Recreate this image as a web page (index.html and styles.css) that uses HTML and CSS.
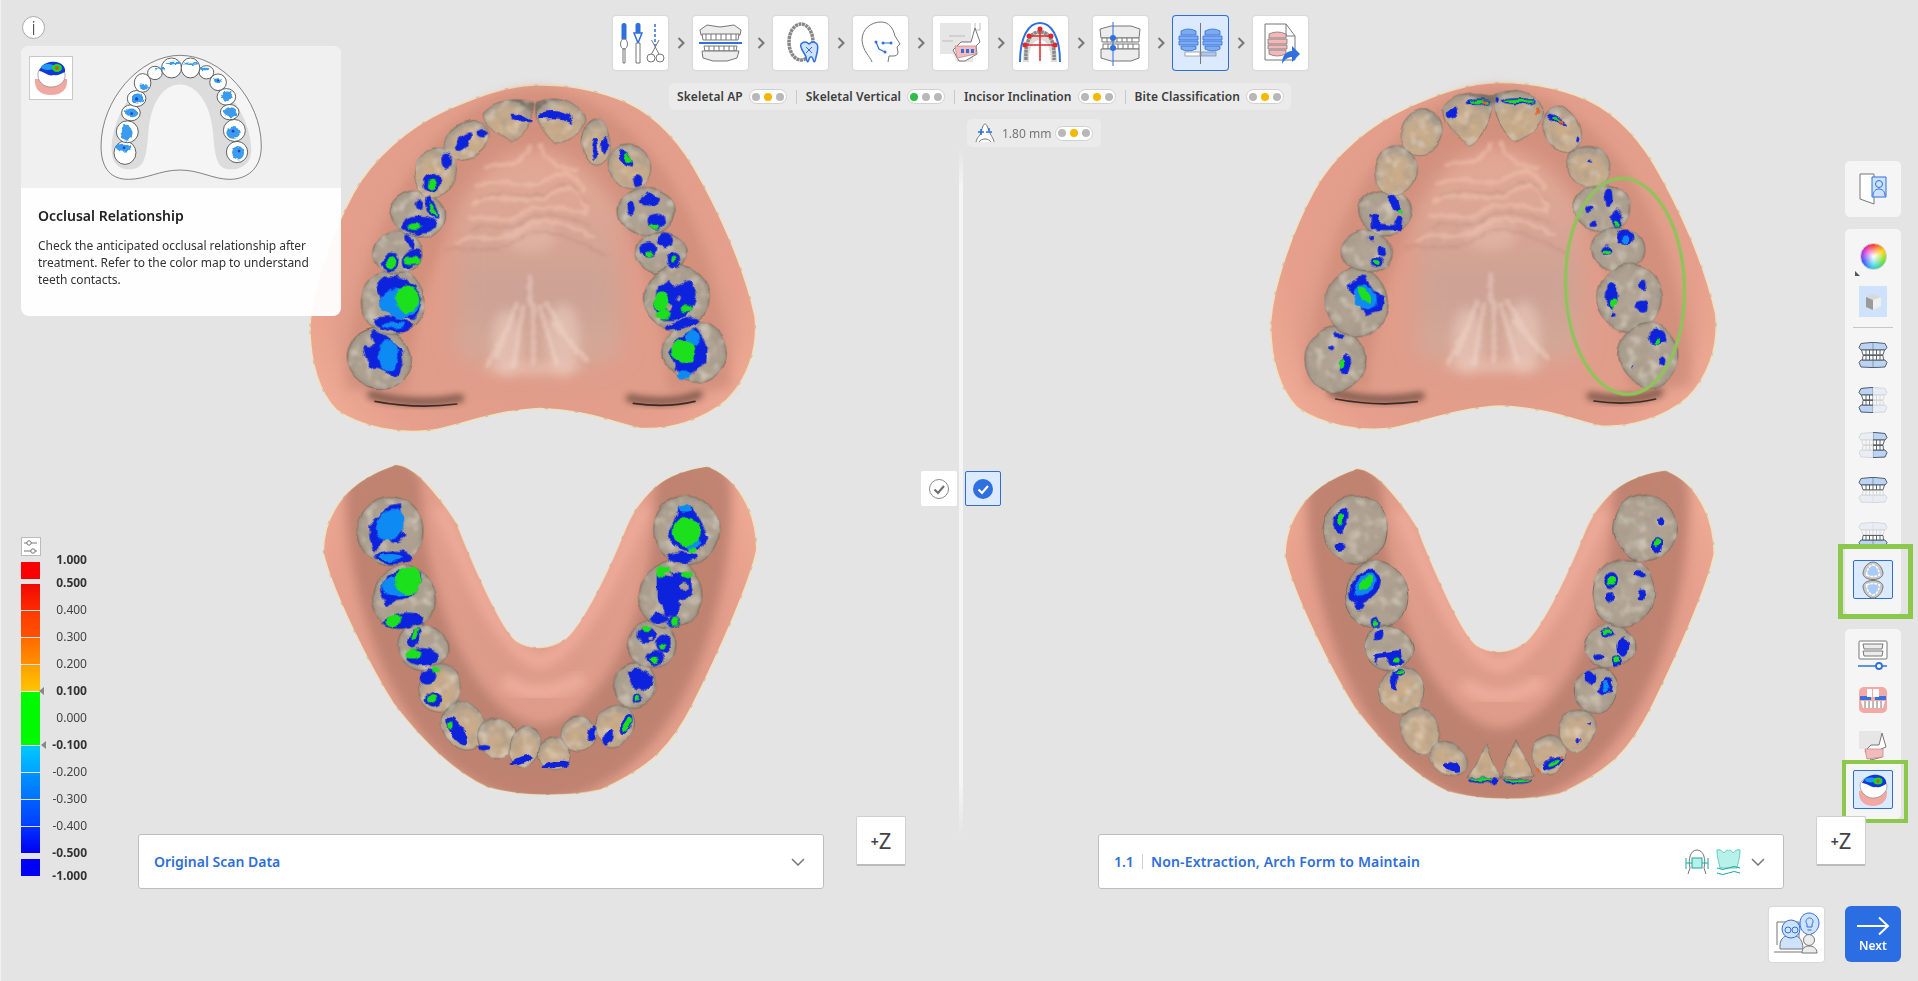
FILE: index.html
```html
<!DOCTYPE html>
<html lang="en">
<head>
<meta charset="utf-8">
<title>Occlusal Relationship</title>
<link rel="stylesheet" href="styles.css">
</head>
<body>
<div class="app">

<svg class="defs" width="0" height="0">
  <defs>
    <radialGradient id="gumOuter" gradientUnits="userSpaceOnUse" cx="700" cy="520" r="760">
      <stop offset="0" stop-color="#d99a88"/><stop offset=".8" stop-color="#e59f8c"/><stop offset="1" stop-color="#f0ac97"/>
    </radialGradient>
    <linearGradient id="palate" x1="0" y1="0" x2="0" y2="1">
      <stop offset="0" stop-color="#e3a996"/><stop offset=".35" stop-color="#d9a594"/><stop offset=".65" stop-color="#cca395"/><stop offset="1" stop-color="#d6a999"/>
    </linearGradient>
    <radialGradient id="molar" cx=".5" cy=".5" r=".55">
      <stop offset="0" stop-color="#b3a695"/><stop offset=".78" stop-color="#ada190"/><stop offset=".93" stop-color="#9a8f80"/><stop offset="1" stop-color="#665e54"/>
    </radialGradient>
    <radialGradient id="front" cx=".5" cy=".6" r=".6">
      <stop offset="0" stop-color="#cdad87"/><stop offset=".65" stop-color="#c4ab8e"/><stop offset=".92" stop-color="#a59a8a"/><stop offset="1" stop-color="#7d7365"/>
    </radialGradient>
    <filter id="rough" x="-10%" y="-10%" width="120%" height="120%">
      <feTurbulence type="fractalNoise" baseFrequency=".035" numOctaves="2" seed="4"/>
      <feDisplacementMap in="SourceGraphic" scale="20" xChannelSelector="R" yChannelSelector="G"/>
    </filter>
    <filter id="rough2" x="-10%" y="-10%" width="120%" height="120%">
      <feTurbulence type="fractalNoise" baseFrequency=".07" numOctaves="2" seed="9"/>
      <feDisplacementMap in="SourceGraphic" scale="12" xChannelSelector="R" yChannelSelector="G"/>
    </filter>
    <filter id="tex" x="-5%" y="-5%" width="110%" height="110%">
      <feTurbulence type="fractalNoise" baseFrequency=".011" numOctaves="1" seed="7" result="n"/>
      <feDisplacementMap in="SourceGraphic" in2="n" scale="26" xChannelSelector="R" yChannelSelector="G" result="d"/>
      <feTurbulence type="fractalNoise" baseFrequency=".03" numOctaves="2" seed="2" result="n2"/>
      <feColorMatrix in="n2" type="matrix" values="0 0 0 0 .34  0 0 0 0 .3  0 0 0 0 .26  1.500 0 0 0 -.66" result="spots"/>
      <feGaussianBlur in="spots" stdDeviation="3" result="spotsB"/>
      <feComposite in="spotsB" in2="d" operator="in" result="sp"/>
      <feColorMatrix in="n2" type="matrix" values="0 0 0 0 .88  0 0 0 0 .82  0 0 0 0 .72  0 1.200 0 0 -.6" result="lights"/>
      <feGaussianBlur in="lights" stdDeviation="3" result="lightsB"/>
      <feComposite in="lightsB" in2="d" operator="in" result="li"/>
      <feMerge><feMergeNode in="d"/><feMergeNode in="sp"/><feMergeNode in="li"/></feMerge>
    </filter>
    <filter id="soft" x="-30%" y="-30%" width="160%" height="160%"><feGaussianBlur stdDeviation="16"/></filter>
    <filter id="softer" x="-40%" y="-40%" width="180%" height="180%"><feGaussianBlur stdDeviation="34"/></filter>
    <filter id="soft3" x="-30%" y="-120%" width="160%" height="340%"><feGaussianBlur stdDeviation="9"/></filter>
    <filter id="soft2" x="-30%" y="-30%" width="160%" height="160%"><feGaussianBlur stdDeviation="4"/></filter>

    <path id="ubOutline" d="M30 710C35 600 95 430 160 310C220 200 330 110 440 60C530 20 620-15 720-15C800-15 870-5 950 25C1040 55 1120 130 1180 230C1250 350 1330 520 1365 680C1375 780 1340 870 1280 930C1210 990 1110 1020 1020 1015C950 1000 860 960 720 955C590 960 480 1005 400 1020C300 1035 180 1010 110 960C60 910 30 820 30 710Z"/>
    <path id="lbOutline" d="M70 310C70 180 150 90 290 45C340 50 400 110 470 220C500 300 600 540 650 575C690 600 750 600 800 565C860 510 940 330 980 230C1020 140 1080 70 1220 50C1310 80 1370 180 1370 300C1350 400 1250 620 1180 760C1120 880 1060 950 900 1020C800 1040 660 1040 560 1010C450 960 350 850 280 760C210 650 100 430 70 310Z"/>
    <clipPath id="lbClip"><use href="#lbOutline"/></clipPath>

    <g id="ub">
      <use href="#ubOutline" class="rim"/>
      <path class="gum-in" filter="url(#soft)" d="M110 720C130 600 190 450 260 340C340 210 480 90 720 60C960 80 1090 210 1160 340C1230 470 1300 600 1310 720C1310 820 1270 900 1190 925C1100 945 1010 940 960 915C880 875 800 860 720 860C620 860 520 875 470 915C420 940 300 950 220 925C150 900 110 820 110 720Z"/>
      <path class="up-arc" filter="url(#soft)" d="M230 900C250 520 440 110 710 90C990 110 1180 520 1200 900"/>
      <path fill="url(#palate)" filter="url(#softer)" d="M470 370C540 230 620 190 700 190C790 190 880 240 960 370C950 520 960 700 960 790C900 835 820 825 715 825C620 825 530 835 470 790C470 700 480 520 470 370Z"/>
      <path class="shade-w" filter="url(#soft3)" d="M215 915Q350 950 480 925"/>
      <path class="shade-w" filter="url(#soft3)" d="M990 925Q1100 948 1195 915"/>
      <path class="shade-l" d="M225 934Q350 958 470 942"/>
      <path class="shade-l" d="M1000 940Q1100 955 1185 934"/>
      <g filter="url(#soft)">
        <ellipse class="glow" cx="620" cy="760" rx="45" ry="100"/><ellipse class="glow" cx="790" cy="750" rx="50" ry="110"/><ellipse class="glow" cx="700" cy="835" rx="150" ry="18"/><ellipse class="glow2" cx="690" cy="440" rx="80" ry="50"/>
      </g>
      <g filter="url(#soft2)">
        <g class="streak" filter="url(#rough2)">
          <path d="M650 640L590 800M670 650L640 830M700 640L700 820M720 650L770 820M740 640L830 790M630 700L560 830M760 700L860 810M690 560L690 640"/>
        </g>
        <g class="rugae" filter="url(#rough)">
          <path d="M530 290C600 250 680 310 740 270S830 260 850 300"/>
          <path d="M520 340C600 300 680 360 760 310S840 330 860 360"/>
          <path d="M510 385C570 365 600 415 660 375S780 355 860 370"/>
          <path d="M470 460C530 420 600 470 660 420S800 400 880 440"/>
          <path d="M560 230C610 220 650 240 690 170M720 170C750 240 790 230 830 240"/>
        </g>
        <g class="rugae-d" filter="url(#rough)">
          <path d="M510 415C570 395 610 435 670 395S790 385 870 405"/>
          <path d="M440 480C500 460 570 510 650 450S820 450 920 500"/>
          <path d="M540 325C610 285 680 345 750 300S830 305 860 335"/>
        </g>
      </g>
      <use href="#ubOutline" class="rim-d"/>
    </g>

    <g id="lb">
      <use href="#lbOutline" class="rim"/>
      <g clip-path="url(#lbClip)">
        <path class="lo-floor" filter="url(#soft)" d="M250 120C260 520 450 925 720 940C1000 925 1180 520 1180 120"/>
        <path class="lo-ridge" filter="url(#soft)" d="M420 170C500 350 610 610 720 635C830 610 950 350 1030 170"/>
        <path class="lo-ridge2" filter="url(#soft)" d="M610 690Q720 770 850 680"/>
      </g>
      <use href="#lbOutline" class="rim-d"/>
    </g>

    <g id="setU"><path class="ti-gum" d="M3 1.500L13 .5H17L27 1.500L29 5.500L27 8H3L1 5.500Z"/><path class="ti-line" d="M15 .5V8"/><path class="ti-teeth" d="M3.500 8H26.500L25 12.800H5ZM8 8V12.800M11.500 8V12.800M15 8V12.800M18.500 8V12.800M22 8V12.800"/></g>
    <g id="setL"><path class="ti-gum" d="M3 25L13 25.500H17L27 25L29 20.500L27 18H3L1 20.500Z"/><path class="ti-line" d="M15 25.500V18"/><path class="ti-teeth" d="M4.500 18H25.500L25 13.500H5ZM8 18V13.500M11.500 18V13.500M15 18V13.500M18.500 18V13.500M22 18V13.500"/></g>
    <clipPath id="halfL"><rect x="0" y="0" width="15" height="26"/></clipPath>
    <clipPath id="halfR"><rect x="15" y="0" width="15" height="26"/></clipPath>
  </defs>
</svg>

<!-- Upper left scan -->
<svg class="scan scan-ul" viewBox="0 0 1440 1050">
  <use href="#ub"/>
  <g filter="url(#tex)">
    <g class="t-m">
      <ellipse cx="238" cy="805" rx="97" ry="90" transform="rotate(20 238 805)"/><ellipse cx="278" cy="637" rx="94" ry="97"/><ellipse cx="295" cy="490" rx="74" ry="64"/><ellipse cx="352" cy="372" rx="82" ry="70"/><ellipse cx="1038" cy="365" rx="84" ry="70"/><ellipse cx="1085" cy="488" rx="77" ry="64"/><ellipse cx="1130" cy="625" rx="97" ry="97"/><ellipse cx="1185" cy="785" rx="97" ry="92"/>
    </g>
    <g class="t-f">
      <ellipse cx="408" cy="245" rx="62" ry="74" transform="rotate(25 408 245)"/><ellipse cx="500" cy="150" rx="72" ry="50" transform="rotate(-28 500 150)"/><path d="M550 70C590 30 660 25 705 40C700 90 660 150 630 158C590 130 550 110 550 70Z"/><path d="M710 40C760 20 830 30 852 85C840 130 790 160 765 160C730 130 705 90 710 40Z"/><ellipse cx="888" cy="158" rx="47" ry="74" transform="rotate(-5 888 158)"/><ellipse cx="990" cy="232" rx="62" ry="68" transform="rotate(-20 990 232)"/>
    </g>
  </g>
  <g filter="url(#rough)">
    <g class="bl">
      <path d="M215 720C250 725 275 745 305 780L310 815C305 845 295 865 280 862C255 845 240 825 212 838C202 810 186 785 192 765C215 772 238 772 215 745Z"/>
      <path d="M230 590C245 545 300 555 340 585C372 620 368 660 340 690C300 682 262 672 245 640Z"/><ellipse cx="278" cy="702" rx="56" ry="22" transform="rotate(8 278 702)"/>
      <ellipse cx="272" cy="515" rx="24" ry="30"/><ellipse cx="335" cy="505" rx="34" ry="22" transform="rotate(-40 335 505)"/><ellipse cx="330" cy="455" rx="10" ry="26" transform="rotate(-25 330 455)"/>
      <ellipse cx="358" cy="405" rx="54" ry="26"/><ellipse cx="395" cy="355" rx="14" ry="36" transform="rotate(-25 395 355)"/><ellipse cx="355" cy="343" rx="11" ry="15"/>
      <ellipse cx="395" cy="278" rx="26" ry="28"/><ellipse cx="440" cy="212" rx="16" ry="24"/>
      <ellipse cx="490" cy="155" rx="34" ry="16" transform="rotate(-50 490 155)"/><ellipse cx="548" cy="130" rx="18" ry="12"/>
      <ellipse cx="660" cy="85" rx="34" ry="9" transform="rotate(20 660 85)"/><path d="M715 70C760 55 810 65 820 100C790 80 750 85 715 85Z"/>
      <ellipse cx="885" cy="175" rx="9" ry="32"/><ellipse cx="915" cy="168" rx="9" ry="28"/>
      <ellipse cx="978" cy="205" rx="30" ry="13" transform="rotate(50 978 205)"/><ellipse cx="1012" cy="272" rx="15" ry="16"/>
      <ellipse cx="1050" cy="330" rx="30" ry="20"/><ellipse cx="992" cy="355" rx="12" ry="20"/><ellipse cx="1070" cy="395" rx="28" ry="24"/>
      <ellipse cx="1095" cy="450" rx="24" ry="22"/><ellipse cx="1045" cy="478" rx="24" ry="22"/><ellipse cx="1120" cy="510" rx="20" ry="22"/>
      <path d="M1075 590L1105 570L1120 590L1170 570L1190 610L1180 650L1160 680L1120 690L1080 690L1065 650L1070 620Z"/><ellipse cx="1145" cy="702" rx="52" ry="14" transform="rotate(-15 1145 702)"/>
      <path d="M1130 750L1190 710L1220 770L1215 820L1170 850L1150 870L1130 840L1105 790Z"/>
    </g>
    <g class="cy">
      <ellipse cx="265" cy="795" rx="30" ry="48"/><ellipse cx="300" cy="640" rx="60" ry="45"/><ellipse cx="280" cy="705" rx="35" ry="10"/><ellipse cx="1150" cy="855" rx="20" ry="14"/><ellipse cx="1180" cy="745" rx="20" ry="25"/>
    </g>
    <g class="gr">
      <ellipse cx="322" cy="628" rx="36" ry="38"/><ellipse cx="275" cy="515" rx="14" ry="20"/><ellipse cx="335" cy="512" rx="24" ry="10"/><ellipse cx="345" cy="410" rx="22" ry="10"/><ellipse cx="400" cy="360" rx="6" ry="22" transform="rotate(-25 400 360)"/><ellipse cx="395" cy="285" rx="14" ry="13"/><ellipse cx="985" cy="205" rx="18" ry="7" transform="rotate(50 985 205)"/><ellipse cx="1065" cy="410" rx="16" ry="8"/><ellipse cx="1045" cy="490" rx="12" ry="8"/><ellipse cx="1122" cy="510" rx="8" ry="10"/><ellipse cx="1085" cy="635" rx="20" ry="28"/><ellipse cx="1160" cy="655" rx="18" ry="12"/><ellipse cx="1090" cy="675" rx="24" ry="14"/><ellipse cx="1150" cy="785" rx="36" ry="34"/>
    </g>
    <g class="hole"><ellipse cx="1105" cy="655" rx="9" ry="8"/><ellipse cx="1135" cy="625" rx="8" ry="5"/></g>
  </g>
</svg>

<!-- Lower left scan -->
<svg class="scan scan-ll" viewBox="0 0 1440 1080">
  <use href="#lb"/>
  <g filter="url(#tex)">
    <g class="t-m">
      <ellipse cx="270" cy="245" rx="99" ry="102"/><ellipse cx="312" cy="445" rx="94" ry="97"/><ellipse cx="367" cy="592" rx="74" ry="70"/><ellipse cx="1005" cy="705" rx="67" ry="67"/><ellipse cx="1055" cy="585" rx="70" ry="72"/><ellipse cx="1112" cy="435" rx="97" ry="102"/><ellipse cx="1158" cy="240" rx="97" ry="107"/>
    </g>
    <g class="t-f">
      <ellipse cx="420" cy="710" rx="64" ry="70"/><ellipse cx="490" cy="825" rx="64" ry="77" transform="rotate(-25 490 825)"/><ellipse cx="590" cy="860" rx="57" ry="60" transform="rotate(-20 590 860)"/><ellipse cx="675" cy="890" rx="47" ry="60" transform="rotate(15 675 890)"/><ellipse cx="762" cy="912" rx="47" ry="47"/><ellipse cx="835" cy="853" rx="52" ry="52"/><ellipse cx="945" cy="825" rx="57" ry="67" transform="rotate(25 945 825)"/>
    </g>
  </g>
  <g filter="url(#rough)">
    <g class="bl">
      <path d="M205 230L270 165L300 160L305 240L320 255L290 280L250 270L225 305L210 270Z"/><ellipse cx="278" cy="322" rx="56" ry="20"/>
      <path d="M240 420C250 370 320 340 365 370C370 420 330 450 290 450L260 470Z"/><ellipse cx="310" cy="510" rx="60" ry="22" transform="rotate(-5 310 510)"/>
      <ellipse cx="342" cy="565" rx="16" ry="32" transform="rotate(25 342 565)"/><ellipse cx="368" cy="620" rx="48" ry="26"/>
      <ellipse cx="385" cy="680" rx="24" ry="24"/><ellipse cx="400" cy="748" rx="26" ry="22"/>
      <ellipse cx="470" cy="842" rx="20" ry="52" transform="rotate(-35 470 842)"/><ellipse cx="552" cy="893" rx="20" ry="8"/><ellipse cx="665" cy="930" rx="38" ry="11" transform="rotate(-20 665 930)"/><ellipse cx="765" cy="945" rx="46" ry="11" transform="rotate(-8 765 945)"/>
      <ellipse cx="876" cy="850" rx="11" ry="24" transform="rotate(15 876 850)"/><ellipse cx="924" cy="862" rx="13" ry="26" transform="rotate(20 924 862)"/><ellipse cx="978" cy="825" rx="16" ry="32" transform="rotate(25 978 825)"/>
      <path d="M980 660L1015 655L1060 680L1055 700L1025 725L995 710Z"/><ellipse cx="1012" cy="747" rx="14" ry="13"/>
      <ellipse cx="1040" cy="555" rx="28" ry="24"/><ellipse cx="1090" cy="580" rx="22" ry="30"/><ellipse cx="1065" cy="625" rx="26" ry="22"/>
      <path d="M1070 360L1170 370L1180 440L1140 450L1130 500L1100 500L1070 440Z"/><ellipse cx="1075" cy="505" rx="28" ry="15"/><ellipse cx="1120" cy="515" rx="20" ry="15"/>
      <path d="M1100 265L1140 170L1180 170L1225 260L1195 305L1140 300Z"/><ellipse cx="1145" cy="322" rx="45" ry="16"/>
    </g>
    <g class="cy">
      <ellipse cx="270" cy="225" rx="38" ry="52" transform="rotate(30 270 225)"/><ellipse cx="270" cy="322" rx="38" ry="10"/><ellipse cx="295" cy="410" rx="50" ry="30"/><ellipse cx="1180" cy="280" rx="20" ry="22"/><ellipse cx="1155" cy="175" rx="18" ry="10"/>
    </g>
    <g class="gr">
      <ellipse cx="325" cy="392" rx="40" ry="42"/><ellipse cx="280" cy="510" rx="24" ry="18"/><ellipse cx="345" cy="552" rx="8" ry="18" transform="rotate(25 345 552)"/><ellipse cx="340" cy="612" rx="24" ry="14"/><ellipse cx="405" cy="658" rx="12" ry="8"/><ellipse cx="395" cy="745" rx="14" ry="13"/><ellipse cx="450" cy="825" rx="8" ry="10"/><ellipse cx="980" cy="825" rx="10" ry="24" transform="rotate(25 980 825)"/><ellipse cx="1012" cy="747" rx="8" ry="7"/><ellipse cx="1040" cy="535" rx="14" ry="8"/><ellipse cx="1085" cy="590" rx="8" ry="8"/><ellipse cx="1065" cy="630" rx="14" ry="10"/><ellipse cx="1090" cy="365" rx="24" ry="18"/><ellipse cx="1160" cy="375" rx="18" ry="10"/><ellipse cx="1125" cy="515" rx="12" ry="12"/><ellipse cx="1160" cy="245" rx="42" ry="42"/><ellipse cx="1180" cy="300" rx="12" ry="8"/>
    </g>
    <g class="hole"><ellipse cx="1105" cy="375" rx="10" ry="9"/><ellipse cx="1150" cy="410" rx="14" ry="8"/><ellipse cx="1050" cy="565" rx="8" ry="6"/></g>
  </g>
</svg>

<!-- Upper right scan -->
<svg class="scan scan-ur" viewBox="0 0 1440 1080">
  <use href="#ub" transform="translate(32 23)"/>
  <g filter="url(#tex)">
    <g class="t-m">
      <ellipse cx="255" cy="838" rx="90" ry="100"/><ellipse cx="320" cy="668" rx="92" ry="100"/><ellipse cx="350" cy="515" rx="77" ry="64"/><ellipse cx="405" cy="395" rx="82" ry="67"/><ellipse cx="1055" cy="385" rx="84" ry="70"/><ellipse cx="1105" cy="508" rx="80" ry="67"/><ellipse cx="1140" cy="655" rx="97" ry="100"/><ellipse cx="1195" cy="825" rx="92" ry="97"/>
    </g>
    <g class="t-f">
      <ellipse cx="440" cy="270" rx="62" ry="74" transform="rotate(10 440 270)"/><ellipse cx="515" cy="155" rx="60" ry="68" transform="rotate(30 515 155)"/><path d="M578 90C610 40 680 35 730 50C730 110 690 190 660 195C620 170 580 140 578 90Z"/><path d="M730 50C790 20 860 40 878 95C860 150 820 180 795 185C760 160 730 110 730 50Z"/><ellipse cx="935" cy="150" rx="54" ry="74" transform="rotate(-30 935 150)"/><ellipse cx="1015" cy="260" rx="64" ry="64"/>
    </g>
  </g>
  <g filter="url(#rough)">
    <g class="bl">
      <ellipse cx="265" cy="764" rx="18" ry="8"/><ellipse cx="245" cy="805" rx="7" ry="8"/><ellipse cx="285" cy="852" rx="18" ry="30"/>
      <path d="M290 615L340 585L370 630L405 650L395 690L345 705L325 660L295 635Z"/>
      <ellipse cx="380" cy="545" rx="20" ry="16"/><ellipse cx="365" cy="475" rx="8" ry="9"/><ellipse cx="395" cy="515" rx="12" ry="13"/>
      <path d="M365 405L385 400L385 430L430 435L440 410L458 415L450 450L365 450Z"/><ellipse cx="432" cy="370" rx="12" ry="30" transform="rotate(-25 432 370)"/>
      <ellipse cx="1075" cy="352" rx="13" ry="26"/><ellipse cx="1100" cy="415" rx="15" ry="26"/><ellipse cx="1030" cy="432" rx="8" ry="9"/><ellipse cx="1018" cy="387" rx="9" ry="9"/>
      <ellipse cx="1125" cy="472" rx="22" ry="26"/><ellipse cx="1070" cy="510" rx="18" ry="14"/>
      <ellipse cx="1085" cy="650" rx="15" ry="38"/><ellipse cx="1180" cy="615" rx="10" ry="12"/><ellipse cx="1175" cy="680" rx="18" ry="15"/><ellipse cx="1090" cy="703" rx="7" ry="7"/>
      <ellipse cx="1222" cy="770" rx="26" ry="22"/><ellipse cx="1237" cy="845" rx="9" ry="15"/><ellipse cx="1150" cy="862" rx="3" ry="3"/>
      <ellipse cx="605" cy="100" rx="20" ry="10" transform="rotate(-35 605 100)"/><ellipse cx="685" cy="65" rx="38" ry="9"/><ellipse cx="740" cy="60" rx="6" ry="11"/><ellipse cx="805" cy="65" rx="52" ry="11"/><ellipse cx="918" cy="118" rx="30" ry="9" transform="rotate(30 918 118)"/><ellipse cx="982" cy="180" rx="6" ry="10"/><ellipse cx="1020" cy="243" rx="5" ry="4"/>
    </g>
    <g class="cy"><ellipse cx="345" cy="650" rx="30" ry="40" transform="rotate(-30 345 650)"/><ellipse cx="1125" cy="480" rx="10" ry="14"/></g>
    <g class="gr">
      <ellipse cx="275" cy="852" rx="8" ry="18"/><ellipse cx="345" cy="645" rx="12" ry="30" transform="rotate(-30 345 645)"/><ellipse cx="380" cy="545" rx="12" ry="8"/><ellipse cx="450" cy="395" rx="9" ry="6"/><ellipse cx="1070" cy="515" rx="12" ry="6"/><ellipse cx="1090" cy="670" rx="10" ry="12"/><ellipse cx="1222" cy="782" rx="8" ry="8"/><ellipse cx="1100" cy="430" rx="6" ry="8"/><ellipse cx="690" cy="65" rx="30" ry="5"/><ellipse cx="805" cy="65" rx="45" ry="6"/><ellipse cx="920" cy="118" rx="12" ry="4" transform="rotate(30 920 118)"/>
    </g>
    <g class="or"><ellipse cx="862" cy="95" rx="6" ry="10"/><ellipse cx="930" cy="125" rx="8" ry="6"/><ellipse cx="705" cy="65" rx="7" ry="4"/></g>
  </g>
  <ellipse class="mark" cx="1125" cy="619" rx="178" ry="324" transform="rotate(-2 1125 619)"/>
</svg>

<!-- Lower right scan -->
<svg class="scan scan-lr" viewBox="0 0 1410 1110">
  <use href="#lb" transform="translate(-24 12) scale(.99 1)"/>
  <g filter="url(#tex)">
    <g class="t-m">
      <ellipse cx="255" cy="240" rx="97" ry="102"/><ellipse cx="320" cy="435" rx="94" ry="102"/><ellipse cx="355" cy="595" rx="72" ry="67"/><ellipse cx="980" cy="720" rx="67" ry="67"/><ellipse cx="1020" cy="590" rx="72" ry="67"/><ellipse cx="1060" cy="430" rx="94" ry="102"/><ellipse cx="1125" cy="235" rx="94" ry="102"/>
    </g>
    <g class="t-f">
      <ellipse cx="395" cy="718" rx="67" ry="67"/><ellipse cx="450" cy="840" rx="57" ry="74" transform="rotate(-15 450 840)"/><ellipse cx="535" cy="925" rx="60" ry="47" transform="rotate(30 535 925)"/><path d="M590 985L650 885L690 985Z"/><path d="M690 985L735 875L790 980Z"/><ellipse cx="835" cy="915" rx="52" ry="57"/><ellipse cx="920" cy="840" rx="54" ry="67" transform="rotate(15 920 840)"/>
    </g>
  </g>
  <g filter="url(#rough)">
    <g class="bl">
      <ellipse cx="212" cy="210" rx="20" ry="40" transform="rotate(20 212 210)"/><ellipse cx="210" cy="290" rx="16" ry="12"/>
      <ellipse cx="285" cy="410" rx="38" ry="58" transform="rotate(40 285 410)"/><ellipse cx="270" cy="468" rx="13" ry="12"/><ellipse cx="318" cy="517" rx="16" ry="13"/>
      <ellipse cx="325" cy="555" rx="13" ry="20" transform="rotate(30 325 555)"/><path d="M310 610L390 600L400 640L360 650L350 620L325 625L320 650Z"/>
      <ellipse cx="372" cy="695" rx="9" ry="30"/><ellipse cx="385" cy="665" rx="18" ry="9"/>
      <ellipse cx="955" cy="820" rx="5" ry="4"/><ellipse cx="925" cy="872" rx="5" ry="11"/>
      <ellipse cx="850" cy="940" rx="32" ry="15" transform="rotate(-25 850 940)"/><ellipse cx="548" cy="952" rx="26" ry="14" transform="rotate(25 548 952)"/><ellipse cx="632" cy="990" rx="38" ry="9"/><ellipse cx="672" cy="992" rx="10" ry="10"/><ellipse cx="740" cy="992" rx="46" ry="9"/>
      <ellipse cx="960" cy="682" rx="16" ry="20"/><path d="M980 725L1010 680L1030 690L1025 730L995 735Z"/>
      <ellipse cx="1010" cy="548" rx="20" ry="11"/><ellipse cx="1060" cy="590" rx="18" ry="30"/><ellipse cx="1040" cy="635" rx="16" ry="18"/><ellipse cx="985" cy="620" rx="15" ry="10"/>
      <ellipse cx="1025" cy="390" rx="19" ry="24"/><ellipse cx="1108" cy="372" rx="16" ry="12"/><ellipse cx="1115" cy="435" rx="10" ry="16"/><ellipse cx="1020" cy="440" rx="12" ry="16"/>
      <ellipse cx="1172" cy="213" rx="11" ry="11"/><ellipse cx="1160" cy="285" rx="16" ry="24"/>
    </g>
    <g class="cy"><ellipse cx="285" cy="405" rx="24" ry="40" transform="rotate(40 285 405)"/><ellipse cx="1010" cy="710" rx="10" ry="18"/></g>
    <g class="gr">
      <ellipse cx="212" cy="205" rx="8" ry="18"/><ellipse cx="288" cy="400" rx="10" ry="26" transform="rotate(40 288 400)"/><ellipse cx="318" cy="518" rx="10" ry="7"/><ellipse cx="380" cy="630" rx="9" ry="8"/><ellipse cx="388" cy="664" rx="12" ry="5"/><ellipse cx="850" cy="940" rx="20" ry="7" transform="rotate(-25 850 940)"/><ellipse cx="632" cy="988" rx="32" ry="5"/><ellipse cx="740" cy="990" rx="40" ry="5"/><ellipse cx="1010" cy="546" rx="14" ry="6"/><ellipse cx="1040" cy="632" rx="10" ry="10"/><ellipse cx="1025" cy="392" rx="10" ry="12"/><ellipse cx="1160" cy="275" rx="8" ry="10"/>
    </g>
    <g class="or"><ellipse cx="802" cy="958" rx="7" ry="7"/><ellipse cx="875" cy="925" rx="5" ry="7"/></g>
  </g>
</svg>

<div class="divider"></div>

<div class="layer left-rail">
  <button class="info">i</button>
  <section class="guide">
    <div class="guide-figure">
      <div class="guide-thumb">
        <svg viewBox="0 0 42 42" width="42" height="42">
          <path fill="#f0a8a0" d="M5 22C4 32 10 38 21 38C32 38 38 32 37 22Z"/>
          <path fill="#fff" stroke="#777" stroke-width=".6" d="M8 16C9 11 14 8 22 8C30 8 34 12 35 17C36 24 30 30 21 30C13 30 7 24 8 16Z"/>
          <path fill="#1137d8" d="M9 14C12 6 20 4 26 5C32 6 36 10 35 15C30 17 28 19 24 18C18 20 14 14 9 14Z"/>
          <ellipse cx="18" cy="10" rx="7" ry="3" fill="#1c9cf0"/><ellipse cx="27" cy="11" rx="5" ry="4" fill="#22d522"/><ellipse cx="27" cy="11" rx="2" ry="1.800" fill="#e8452a"/>
        </svg>
      </div>
      <svg class="guide-arch" viewBox="300 160 490 385">
        <path class="a-out" d="M303 440C303 300 420 167 540 167C665 167 785 300 785 440C785 510 740 540 690 540C640 540 600 512 540 512C480 512 440 540 385 540C335 540 303 510 303 440Z"/>
        <path class="a-band" d="M335 450C335 350 420 205 540 205C660 205 755 350 755 450C755 495 725 510 690 510C655 510 645 480 640 400C632 310 590 255 540 255C490 255 452 310 445 400C440 480 430 510 390 510C355 510 335 490 335 450Z"/>
        <g class="a-t">
          <ellipse cx="375" cy="460" rx="33" ry="35"/><ellipse cx="382" cy="397" rx="33" ry="33"/><ellipse cx="393" cy="340" rx="28" ry="24"/><ellipse cx="410" cy="297" rx="28" ry="24"/><ellipse cx="428" cy="250" rx="25" ry="28"/><ellipse cx="465" cy="220" rx="22" ry="20"/><ellipse cx="515" cy="205" rx="30" ry="30"/><ellipse cx="572" cy="205" rx="28" ry="30"/><ellipse cx="620" cy="218" rx="22" ry="20"/><ellipse cx="655" cy="248" rx="25" ry="25"/><ellipse cx="680" cy="292" rx="28" ry="25"/><ellipse cx="690" cy="338" rx="28" ry="23"/><ellipse cx="704" cy="393" rx="33" ry="33"/><ellipse cx="712" cy="458" rx="32" ry="32"/>
        </g>
        <g class="a-b" filter="url(#rough2)">
          <ellipse cx="370" cy="445" rx="24" ry="12"/><ellipse cx="380" cy="400" rx="18" ry="24"/><ellipse cx="395" cy="340" rx="20" ry="13"/><ellipse cx="412" cy="297" rx="18" ry="15"/><ellipse cx="432" cy="262" rx="12" ry="9"/><ellipse cx="480" cy="207" rx="16" ry="3"/><ellipse cx="520" cy="190" rx="24" ry="4"/><ellipse cx="575" cy="192" rx="22" ry="4"/><ellipse cx="615" cy="208" rx="14" ry="4"/><ellipse cx="655" cy="243" rx="12" ry="7"/><ellipse cx="682" cy="290" rx="16" ry="14"/><ellipse cx="692" cy="338" rx="20" ry="15"/><ellipse cx="700" cy="400" rx="20" ry="18"/><ellipse cx="715" cy="460" rx="18" ry="20"/>
        </g>
        <g class="a-g"><circle cx="372" cy="445" r="4"/><circle cx="395" cy="342" r="4"/><circle cx="410" cy="298" r="5"/><circle cx="655" cy="243" r="3"/><circle cx="700" cy="395" r="4"/><circle cx="718" cy="455" r="4"/></g>
      </svg>
    </div>
    <div class="guide-body">
      <h2>Occlusal Relationship</h2>
      <p>Check the anticipated occlusal relationship after treatment. Refer to the color map to understand teeth contacts.</p>
    </div>
  </section>

  <div class="legend">
    <div class="legend-bars">
      <button class="legend-btn">
        <svg viewBox="0 0 18 18" width="18" height="18"><path class="i-grey" d="M2 5H15M2 13H15"/><circle class="i-wh" cx="7" cy="5" r="2.200"/><circle class="i-wh" cx="11" cy="13" r="2.200"/></svg>
      </button>
      <i class="seg s1"></i><i class="seg s2"></i><i class="seg s3"></i><i class="seg s4"></i><i class="seg s5"></i><i class="seg s6"></i><i class="seg s7"></i><i class="seg s8"></i><i class="seg s9"></i><i class="seg s10"></i><i class="seg s11"></i>
    </div>
    <div class="legend-labels">
      <b class="lab-first">1.000</b><b class="lab-sec">0.500</b><span>0.400</span><span>0.300</span><span>0.200</span>
      <b class="tick">0.100</b><span>0.000</span><b class="tick t2">-0.100</b><span>-0.200</span><span>-0.300</span><span>-0.400</span><b class="lab-half">-0.500</b><b class="lab-last">-1.000</b>
    </div>
  </div>
</div>

<div class="layer top-center">
  <nav class="steps">
    <button class="step">
      <svg viewBox="0 0 55 54"><rect class="f-blue" x="8.500" y="7" width="5" height="18" rx="2.500"/><ellipse class="s-grey f-white" cx="11" cy="28" rx="3.500" ry="5"/><path class="s-grey f-white" d="M10 33H12V47H10Z"/><rect class="f-blue" x="22.500" y="7" width="5" height="14" rx="2"/><path class="s-blue2 f-white" d="M21 17H29L25 27Z"/><path class="s-grey f-white" d="M23 27H27V47H23Z"/><path class="dash" d="M42 8V30"/><path class="s-grey" d="M38.500 24L46 38M46 24L38.500 38"/><circle class="s-grey f-white" cx="38" cy="42" r="4"/><circle class="s-grey f-white" cx="47" cy="42" r="4"/></svg>
    </button>
    <span class="chev"><svg viewBox="0 0 8 12" width="8" height="12"><path d="M1.500 1L6.500 6L1.500 11"/></svg></span>
    <button class="step">
      <svg viewBox="0 0 55 54"><path class="s-grey f-lgrey" d="M7 14L14 9L27 11L41 9L48 14L47 19H8Z"/><path class="s-grey f-white" d="M9 18H46L45 24H10ZM13 18V24M18 18V24M23 18V24M28 18V24M33 18V24M38 18V24M43 18V24"/><path class="s-grey f-white" d="M11 30H44L43 35H12ZM16 30V35M21 30V35M26 30V35M31 30V35M36 30V35M41 30V35"/><path class="s-grey f-lgrey" d="M9 35H46L44 42L34 45H20L10 42Z"/><path class="line-b" d="M6 27H49"/></svg>
    </button>
    <span class="chev"><svg viewBox="0 0 8 12" width="8" height="12"><path d="M1.500 1L6.500 6L1.500 11"/></svg></span>
    <button class="step">
      <svg viewBox="0 0 55 54"><ellipse class="beads" cx="28" cy="26" rx="12" ry="18"/><path class="s-blue2 f-lblue" d="M28 28C31 25 34 26 36 28C38 26 41 25 44 28C46 32 44 37 43 41C42 47 41 47 40 43C39 40 37 40 36 43C35 47 34 47 33 41C32 37 26 32 28 28Z"/><path class="s-blue" d="M33 31L39 37M39 31L33 37"/></svg>
    </button>
    <span class="chev"><svg viewBox="0 0 8 12" width="8" height="12"><path d="M1.500 1L6.500 6L1.500 11"/></svg></span>
    <button class="step">
      <svg viewBox="0 0 55 54"><path class="s-grey" d="M19 46C17 40 10 36 9 24C9 13 18 6 28 6C36 6 40 12 42 20L47 28L44 31L45 36C45 39 43 40 40 40L36 40L35 46"/><path class="line-b2" d="M23 26L26 33L32 36M30 27H38"/><circle class="f-blue" cx="23" cy="26" r="1.500"/><circle class="f-blue" cx="32" cy="36" r="1.500"/><circle class="f-blue" cx="30" cy="27" r="1.500"/><circle class="f-blue" cx="38" cy="27" r="1.500"/></svg>
    </button>
    <span class="chev"><svg viewBox="0 0 8 12" width="8" height="12"><path d="M1.500 1L6.500 6L1.500 11"/></svg></span>
    <button class="step">
      <svg viewBox="0 0 55 54"><path class="f-skull" d="M7 7H38V30H40V46H24L20 38H7Z"/><path class="s-lgrey" d="M42 7V14H47V7M9 25H20M16 20H32"/><path class="s-grey f-white" d="M42 12L47 26L43 30L44 38L32 45L26 45L20 34L28 26H38Z"/><path class="s-pink" d="M22 30H43V38L24 42Z"/><g class="f-blue"><rect x="28" y="33" width="3" height="4"/><rect x="33" y="33" width="3" height="4"/><rect x="38" y="33" width="3" height="4"/></g></svg>
    </button>
    <span class="chev"><svg viewBox="0 0 8 12" width="8" height="12"><path d="M1.500 1L6.500 6L1.500 11"/></svg></span>
    <button class="step">
      <svg viewBox="0 0 55 54"><path class="f-band" d="M10 46C10 25 16 14 27 14C38 14 44 25 44 46H38C38 30 33 24 27 24C21 24 16 30 16 46Z"/><path class="beads" d="M13 44C12 26 17 16 27 16C37 16 42 26 41 44"/><path class="arch-b" d="M7 46C7 20 16 7 27 7C38 7 47 20 47 46"/><path class="line-r" d="M27 13V45M11 29H43M16 20H38"/><g class="f-red"><circle cx="27" cy="13" r="2.500"/><circle cx="16" cy="20" r="2.500"/><circle cx="38" cy="20" r="2.500"/><circle cx="12" cy="29" r="2.500"/><circle cx="42" cy="29" r="2.500"/></g></svg>
    </button>
    <span class="chev"><svg viewBox="0 0 8 12" width="8" height="12"><path d="M1.500 1L6.500 6L1.500 11"/></svg></span>
    <button class="step">
      <svg viewBox="0 0 55 54"><path class="s-grey f-lgrey" d="M7 13L18 10L38 10L47 13L46 22H8Z"/><path class="s-grey f-white" d="M9 22H46V26H9ZM14 22V26M19 22V26M24 22V26M29 22V26M34 22V26M39 22V26"/><path class="s-grey f-white" d="M10 28H46V33H10ZM15 28V33M20 28V33M25 28V33M30 28V33M35 28V33M40 28V33"/><path class="s-grey f-lgrey" d="M8 33H46L46 42L38 45L18 45L8 42Z"/><path class="line-bt" d="M20 6V50"/><circle class="f-blue" cx="20" cy="22" r="3"/><circle class="f-blue" cx="20" cy="32" r="3"/></svg>
    </button>
    <span class="chev"><svg viewBox="0 0 8 12" width="8" height="12"><path d="M1.500 1L6.500 6L1.500 11"/></svg></span>
    <button class="step active">
      <svg viewBox="0 0 55 54"><g class="teeth-b"><path d="M8 15Q15 11 23 15V19H8ZM6 20H25V24H6ZM6 25H25V29H6ZM8 30H23V33Q15 37 8 33Z"/><path d="M32 15Q40 11 47 15V19H32ZM30 20H49V24H30ZM30 25H49V29H30ZM32 30H47V33Q40 37 32 33Z"/></g><path class="s-grey" d="M27.500 7V48"/><rect class="bar-w" x="12" y="36" width="15" height="4"/><rect class="bar-b" x="28" y="36" width="15" height="4"/></svg>
    </button>
    <span class="chev"><svg viewBox="0 0 8 12" width="8" height="12"><path d="M1.500 1L6.500 6L1.500 11"/></svg></span>
    <button class="step">
      <svg viewBox="0 0 55 54"><path class="s-grey f-white" d="M12 8H33L42 20V44H12Z"/><path class="s-grey" d="M33 8V20H42"/><g class="teeth-p"><path d="M16 18Q24 14 33 18V22H16ZM15 23H34V28H15ZM15 29H34V33H15ZM16 34H33V38Q24 42 16 38Z"/></g><path class="f-blue" d="M29 48C29 40 33 35 39 35V30L47 38L39 46V41C35 41 32 43 29 48Z"/></svg>
    </button>
  </nav>
  <div class="metrics">
    <span class="m-name">Skeletal AP</span><span class="pill"><i class="dot"></i><i class="dot on-y"></i><i class="dot"></i></span><i class="m-sep"></i>
    <span class="m-name">Skeletal Vertical</span><span class="pill"><i class="dot on-g"></i><i class="dot"></i><i class="dot"></i></span><i class="m-sep"></i>
    <span class="m-name">Incisor Inclination</span><span class="pill"><i class="dot"></i><i class="dot on-y"></i><i class="dot"></i></span><i class="m-sep"></i>
    <span class="m-name">Bite Classification</span><span class="pill"><i class="dot"></i><i class="dot on-y"></i><i class="dot"></i></span>
  </div>
  <div class="metric-sub">
    <svg viewBox="0 0 20 22" width="20" height="22"><path class="s-grey2" d="M1 20C2 15 5 14 6 11C7 7 8 2 10 2C12 2 13 7 15 11C16 14 18 15 19 20M4 20C6 16 14 16 16 20" fill="#fff"/><path class="s-blue2" d="M3 10H9M11 10H17M6 7V13M14 6V9"/></svg>
    <span class="m-val">1.80 mm</span>
    <span class="pill"><i class="dot"></i><i class="dot on-y"></i><i class="dot"></i></span>
  </div>
</div>

<div class="layer checks">
  <button class="check"><svg viewBox="0 0 22 22" width="22" height="22"><circle class="c-ring" cx="11" cy="11" r="9.500"/><path class="c-mark" d="M6.500 11.500L10 15L16 8"/></svg></button>
  <button class="check on"><svg viewBox="0 0 22 22" width="22" height="22"><circle class="f-blue" cx="11" cy="11" r="10"/><path class="c-mark-w" d="M6.500 11.500L10 15L16 8"/></svg></button>
</div>

<aside class="layer right-rail">
  <div class="panel p1">
    <button class="tool"><svg viewBox="0 0 30 34" width="30" height="34"><path class="s-grey f-white" d="M2 2H16V32L2 27Z"/><path class="s-blue f-lblue" d="M14 5H28V25H14Z"/><circle class="s-blue" cx="21" cy="12" r="3.500"/><path class="s-blue" d="M15 24C15 19 18 17 21 17C24 17 27 19 27 24"/></svg></button>
  </div>
  <div class="panel p2">
    <button class="tool tool-wheel"><span class="wheel"></span><i class="corner"></i></button>
    <button class="tool"><span class="cube-bg"><svg viewBox="0 0 18 18" width="18" height="18"><path fill="#d9d9d9" d="M9 1L17 4V13L9 17L2 14V4Z"/><path fill="#9a9a9a" d="M2 4L9 7V17L2 14Z"/><path fill="#eee" d="M9 7L17 4V13L9 17Z"/></svg></span></button>
    <i class="tool-sep"></i>
    <button class="tool"><svg class="ti" viewBox="0 0 30 26"><use href="#setU"/><use href="#setL"/></svg></button>
    <button class="tool"><svg class="ti" viewBox="0 0 30 26"><g opacity=".2"><use href="#setU"/><use href="#setL"/></g><g clip-path="url(#halfL)"><use href="#setU"/><use href="#setL"/></g></svg></button>
    <button class="tool"><svg class="ti" viewBox="0 0 30 26"><g opacity=".2"><use href="#setU"/><use href="#setL"/></g><g clip-path="url(#halfR)"><use href="#setU"/><use href="#setL"/></g></svg></button>
    <button class="tool"><svg class="ti" viewBox="0 0 30 26"><use href="#setU"/><use href="#setL" opacity=".2"/></svg></button>
    <button class="tool"><svg class="ti" viewBox="0 0 30 26"><use href="#setU" opacity=".2"/><use href="#setL"/></svg></button>
    <button class="tool selected">
      <svg viewBox="0 0 24 38" width="24" height="38"><path class="occ" d="M2 12C3 5 8 1 12 1C16 1 21 5 22 12C22 16 18 18.500 12 18.500C6 18.500 2 16 2 12Z"/><path class="occ" d="M2 26C2 22 6 19.500 12 19.500C18 19.500 22 22 22 26C21 33 16 37 12 37C8 37 3 33 2 26Z"/><path class="occ-in" d="M5.500 14C6 8 9 4 12 4C15 4 18 8 18.500 14Q12 17 5.500 14Z"/><path class="occ-in" d="M5.500 24Q12 21 18.500 24C18 30 15 34 12 34C9 34 6 30 5.500 24Z"/></svg>
      <i class="hl hl-a"></i>
    </button>
  </div>
  <div class="panel p3">
    <button class="tool"><svg viewBox="0 0 32 32" width="32" height="32"><rect class="s-grey f-white" x="2" y="2" width="28" height="18" rx="1"/><path class="s-grey f-lgrey" d="M6 5H26L25 10H7ZM6 12H26L25 17H7Z"/><path class="line-b3" d="M1 27H30"/><circle class="knob" cx="22" cy="27" r="3"/></svg></button>
    <button class="tool"><svg viewBox="0 0 30 30" width="30" height="30"><rect fill="#f4a9a5" x="1" y="2" width="28" height="26" rx="5"/><path fill="#3a70e0" d="M2 11H13V15H2ZM17 11H28V15H17Z"/><path fill="#fff" d="M9 4H14V12H9ZM15 4H21V12H15ZM3 16H27L25 23H5Z"/><path class="s-grey" d="M7 16V23M11 16V23M15 16V23M19 16V23M23 16V23"/></svg></button>
    <button class="tool"><svg viewBox="0 0 32 32" width="32" height="32"><path class="f-skull" d="M2 2H24V20H2Z"/><path class="s-grey f-white" d="M25 4L29 18L24 20L25 28L14 31L8 22L14 16H22Z"/><path class="s-pink" d="M8 20H26V28L10 30Z"/></svg></button>
    <button class="tool selected">
      <svg viewBox="0 0 34 34" width="34" height="34"><path fill="#f2a8a3" d="M3 18C2 28 9 33 17 33C25 33 32 28 31 18Z"/><path fill="#fff" stroke="#666" stroke-width=".5" d="M4 12C5 7 10 3 18 3C26 3 30 7 31 13C31 19 25 25 17 25C10 25 4 19 4 12Z"/><path fill="#1137d8" d="M6 10C9 3 17 1 22 2C28 3 31 7 30 11C26 13 24 15 20 14C15 15 11 10 6 10Z"/><ellipse cx="15" cy="7" rx="6" ry="2.500" fill="#1c9cf0"/><ellipse cx="22" cy="8" rx="4.500" ry="3.500" fill="#22d522"/><circle cx="22" cy="8" r="1.500" fill="#e8452a"/></svg>
      <i class="hl hl-b"></i>
    </button>
  </div>
</aside>

<div class="layer bottom">
  <div class="view-row">
    <div class="view-select">
      <span class="view-name">Original Scan Data</span>
      <svg class="caret" viewBox="0 0 14 8" width="14" height="8"><path d="M1 1L7 7L13 1"/></svg>
    </div>
    <button class="axis"><small>+</small>Z</button>
    <div class="view-select second">
      <span class="view-num">1.1</span><i class="view-sep"></i><span class="view-name wide">Non-Extraction, Arch Form to Maintain</span>
      <span class="view-icons">
        <svg viewBox="0 0 24 28" width="24" height="28"><path class="s-grey" d="M5 20C3 12 5 2 12 2C19 2 21 12 19 20L21 26M5 20L3 26"/><rect class="teal" x="7" y="10" width="10" height="10"/><path class="teal-l" d="M1 10V21M1 15H7M23 10V21M17 15H23"/></svg>
        <svg viewBox="0 0 25 28" width="25" height="28"><path class="teal-f" d="M1 2C4 1 6 3 8 5C9 3 11 1 12.500 3C14 1 16 3 17 5C19 3 21 1 24 2C24 10 22 14 21 20H4C3 14 1 10 1 2Z"/><path class="teal-l" d="M1 20Q7 23 12.500 20T24 20M1 25Q7 28 12.500 25T24 25"/></svg>
      </span>
      <svg class="caret" viewBox="0 0 14 8" width="14" height="8"><path d="M1 1L7 7L13 1"/></svg>
    </div>
    <button class="axis"><small>+</small>Z</button>
  </div>
  <div class="action-row">
    <button class="mentor">
      <svg viewBox="0 0 55 54" width="55" height="54"><path class="s-grey" d="M8 38V15H30V38"/><path class="s-grey f-lblue" d="M11 39C11 31 16 28 22 28C28 28 34 31 34 42H11Z"/><circle class="s-blue f-lblue" cx="22" cy="22" r="9"/><circle class="s-blue" cx="19" cy="23" r="3"/><circle class="s-blue" cx="26" cy="23" r="3"/><path class="s-blue f-lblue" d="M40 6C45 6 50 10 50 16C50 22 46 26 42 27L39 33L38 27C34 26 31 22 31 16C31 10 35 6 40 6Z"/><path class="s-blue" d="M38 20V17C36 15 37 11 40.500 11C44 11 45 15 43 17V20ZM38.500 23H42.500"/><circle class="s-grey f-lgrey" cx="40" cy="33" r="5.500"/><path class="s-grey f-lgrey" d="M33 46C33 41 36 39 40 39C44 39 48 41 48 46Z"/><path class="s-grey" d="M5 45H33"/></svg>
    </button>
    <button class="next">
      <svg viewBox="0 0 34 24" width="34" height="24"><path d="M1 12H32M23 3.500L32 12L23 20.500"/></svg>
      <span>Next</span>
    </button>
  </div>
</div>

</div>
</body>
</html>
```

FILE: styles.css
```css
* { box-sizing: border-box; }
html, body { margin: 0; padding: 0; }
body { width: 1918px; height: 981px; overflow: hidden; font-family: "Noto Sans", "Liberation Sans", sans-serif; }
button { font: inherit; padding: 0; margin: 0; border: 0; background: none; color: inherit; }
.app { position: relative; width: 1918px; height: 981px; background: #e4e4e4; border-left: 1px solid #f1f1f1; overflow: hidden; display: grid; grid-template: 1fr / 1fr; }
.layer { grid-area: 1 / 1; position: relative; }
.defs { position: absolute; }

/* scans */
.scan { position: absolute; overflow: visible; }
.scan-ul { left: 299px; top: 90px; width: 480px; height: 350px; }
.scan-ll { left: 299px; top: 450px; width: 480px; height: 360px; }
.scan-ur { left: 1249px; top: 80px; width: 480px; height: 360px; }
.scan-lr { left: 1269px; top: 450px; width: 470px; height: 370px; }
.rim { fill: url(#gumOuter); stroke: #efe2b8; stroke-width: 4; }
.rim-d { fill: none; stroke: #3c2e22; stroke-width: 1.500; stroke-dasharray: 10 80; opacity: .4; }
.gum-in { fill: #e09d8a; }
.up-arc { fill: none; stroke: #c98875; stroke-width: 190; opacity: .6; }
.shade-w { fill: none; stroke: #3c2a22; stroke-width: 26; stroke-linecap: round; opacity: .55; }
.shade-l { fill: none; stroke: #1f1410; stroke-width: 5; stroke-linecap: round; opacity: .8; }
.glow { fill: #edcfc3; opacity: .55; }
.glow2 { fill: #edc8ba; opacity: .35; }
.streak { fill: none; stroke: #f4dcd2; stroke-width: 14; opacity: .4; stroke-linecap: round; }
.rugae { fill: none; stroke: #efc0ac; stroke-width: 13; stroke-linecap: round; opacity: .6; }
.rugae-d { fill: none; stroke: #bd8e7f; stroke-width: 6; stroke-linecap: round; opacity: .55; }
.lo-floor { fill: none; stroke: #b67c6b; stroke-width: 230; stroke-linecap: round; opacity: .8; }
.lo-ridge { fill: none; stroke: #eeaa99; stroke-width: 45; }
.lo-ridge2 { fill: none; stroke: #efad9c; stroke-width: 40; }
.t-m ellipse, .t-m path { fill: url(#molar); stroke: #6c6357; stroke-width: 2.500; }
.t-f ellipse, .t-f path { fill: url(#front); stroke: #7a6f60; stroke-width: 2.500; }
.bl { fill: #0c22dc; }
.cy { fill: #0f8bf2; }
.gr { fill: #1fe01f; }
.or { fill: #e8642a; }
.hole { fill: #ab9e8c; }
.mark { fill: none; stroke: #8dc45a; stroke-width: 10; }

.divider { position: absolute; left: 958px; top: 147px; width: 4px; height: 690px; background: linear-gradient(#e4e4e4, #f5f5f5 6%, #f5f5f5 92%, #e4e4e4); }

/* left rail */
.left-rail { justify-self: start; align-self: start; padding: 16px 0 0 20px; width: 342px; }
.info { display: block; width: 23px; height: 23px; border-radius: 50%; background: #fff; border: 1px solid #a8a8a8; color: #555; font-size: 20px; font-weight: 300; line-height: 20px; text-align: center; margin-left: 1px; }
.guide { width: 320px; height: 270px; margin-top: 7px; border-radius: 8px; overflow: hidden; background: rgba(255, 255, 255, .95); }
.guide-figure { height: 142px; background: #f0f0f0; display: flex; align-items: flex-start; padding: 10px 0 0 8px; }
.guide-thumb { width: 44px; height: 44px; background: #fff; border: 1px solid #c9c9c9; flex: none; }
.guide-arch { width: 163px; height: 128px; margin: -3px 0 0 27px; flex: none; }
.a-out { fill: #f5f5f5; stroke: #6a6a6a; stroke-width: 2.500; }
.a-band { fill: #dcdcdc; }
.a-t ellipse { fill: #fff; stroke: #444; stroke-width: 2.500; }
.a-b { fill: #3a9cee; }
.a-g { fill: #1f3fd0; }
.guide-body { padding: 18px 12px 0 17px; }
.guide-body h2 { margin: 0; font-size: 14px; line-height: 19px; font-weight: 600; color: #222; }
.guide-body p { margin: 12px 0 0; font-size: 12px; letter-spacing: -.04px; line-height: 17px; color: #333; }

.legend { display: flex; margin-top: 221px; }
.legend-bars { width: 20px; display: flex; flex-direction: column; flex: none; }
.legend-btn { width: 20px; height: 19px; background: #fff; border: 1px solid #bbb; display: flex; align-items: center; justify-content: center; margin-bottom: 6px; }
.seg { display: block; width: 19px; height: 26px; margin-bottom: 1px; }
.s1 { height: 17px; background: #fb0000; margin-bottom: 5px; }
.s2 { background: linear-gradient(#ee0a00, #ff2a00); }
.s3 { background: linear-gradient(#ff3a00, #ff5200); }
.s4 { background: linear-gradient(#ff6a00, #ff9000); }
.s5 { background: linear-gradient(#ffa000, #ffc400); }
.s6 { height: 53px; background: #00fa00; }
.s7 { background: linear-gradient(#00c8ff, #00a4ff); }
.s8 { background: linear-gradient(#0092ff, #0072ff); }
.s9 { background: linear-gradient(#0060ff, #0040ff); }
.s10 { background: linear-gradient(#0032ff, #0000f0); margin-bottom: 6px; }
.s11 { height: 17px; background: #0000f4; }
.legend-labels { display: flex; flex-direction: column; align-items: flex-end; width: 46px; padding-top: 15px; font-size: 12px; line-height: 16px; color: #444; }
.legend-labels span, .legend-labels b { height: 27px; position: relative; }
.legend-labels b { font-weight: 700; color: #333; }
.legend-labels .lab-first { height: 23px; }
.legend-labels .lab-sec { height: 26.500px; }
.legend-labels .lab-half { height: 23px; }
.legend-labels .lab-last { height: 20px; }
.tick::before { content: ""; position: absolute; left: -17px; top: 4px; width: 0; height: 0; border: 4px solid transparent; border-left: 0; border-right: 5px solid #888; }
.tick.t2::before { left: -11px; }

/* top */
.top-center { justify-self: start; align-self: start; padding: 16px 0 0 612px; display: flex; flex-direction: column; align-items: flex-start; }
.steps { display: flex; align-items: center; }
.step { width: 55px; height: 54px; background: #fff; border-radius: 3px; box-shadow: 0 0 2px rgba(0, 0, 0, .18); display: block; flex: none; }
.step svg { display: block; width: 55px; height: 54px; }
.step.active { background: #dbeafe; box-shadow: 0 0 0 1px #2f6ed8; }
.chev { width: 25px; display: flex; justify-content: center; flex: none; }
.chev path { fill: none; stroke: #777; stroke-width: 2; }
.metrics { display: flex; align-items: center; height: 27px; margin: 13px 0 0 56px; padding: 0 7px 0 8px; background: #ebebeb; border-radius: 6px; }
.m-name { font-size: 12px; font-weight: 600; letter-spacing: .08px; color: #3d3d3d; white-space: nowrap; margin-right: 6px; }
.m-sep { width: 1px; height: 14px; background: #c9c9c9; margin: 0 9px; }
.pill { display: inline-flex; align-items: center; justify-content: center; gap: 4px; width: 38px; height: 15px; background: #fff; border: 1px solid #d0d0d0; border-radius: 8px; flex: none; }
.dot { width: 8px; height: 8px; border-radius: 50%; background: #b8b8b8; }
.on-y { background: #f5b800; }
.on-g { background: #2cbe45; }
.metric-sub { display: flex; align-items: center; gap: 7px; height: 28px; margin: 9px 0 0 354px; padding: 0 8px; background: #ebebeb; border-radius: 5px; }
.m-val { font-size: 12px; color: #777; white-space: nowrap; margin-right: -3px; }

/* icon paint */
.f-blue { fill: #2f6fe0; stroke: none; }
.f-white { fill: #fff; }
.f-lgrey { fill: #eee; }
.f-lblue { fill: #cfe2fb; }
.f-red { fill: #e3262e; }
.f-band { fill: #dcdcdc; }
.f-skull { fill: #e6e6e6; }
.s-grey { stroke: #777; stroke-width: 1; fill: none; }
.s-grey.f-white { fill: #fff; }
.s-grey.f-lgrey { fill: #ececec; }
.s-grey.f-lblue { fill: #cfe2fb; }
.s-blue { stroke: #2f6fe0; stroke-width: 1; fill: none; }
.s-blue.f-white { fill: #fff; }
.s-blue.f-lblue { fill: #cfe2fb; }
.s-lgrey { stroke: #bbb; fill: none; stroke-width: 1; }
.s-pink { fill: #f3bcbc; stroke: #c88; stroke-width: .8; }
.s-grey2 { stroke: #777; stroke-width: 1; }
.s-blue2 { stroke: #2f6fe0; stroke-width: 1.500; fill: none; }
.s-blue2.f-white { fill: #fff; }
.s-blue2.f-lblue { fill: #cfe2fb; }
.dash { stroke: #2f6fe0; stroke-width: 1.500; stroke-dasharray: 3 2; fill: none; }
.line-b { stroke: #2f6fe0; stroke-width: 2; fill: none; }
.line-b2 { stroke: #2f6fe0; stroke-width: 1.200; fill: none; }
.line-b3 { stroke: #2f6fe0; stroke-width: 1.500; fill: none; }
.line-bt { stroke: #2f6fe0; stroke-width: 1; fill: none; }
.line-r { stroke: #e3262e; stroke-width: 1.500; fill: none; }
.arch-b { stroke: #2f6fe0; stroke-width: 2; fill: none; }
.beads { fill: none; stroke: #888; stroke-width: 3.500; stroke-dasharray: 3 .6; }
.teeth-b { fill: #7eaaf0; stroke: #2f6fe0; stroke-width: .8; }
.teeth-p { fill: #f4b6b6; stroke: #777; stroke-width: .8; }
.bar-w { fill: #fff; stroke: #888; stroke-width: .7; }
.bar-b { fill: #a9c8f4; stroke: #888; stroke-width: .7; }
.i-grey { stroke: #777; stroke-width: 1.200; fill: none; }
.i-wh { fill: #fff; stroke: #777; stroke-width: 1; }
.knob { fill: #fff; stroke: #2f6fe0; stroke-width: 1.800; }

/* checks */
.checks { justify-self: start; align-self: start; display: flex; gap: 8px; margin: 471px 0 0 920px; }
.check { width: 36px; height: 35px; background: #fff; display: flex; align-items: center; justify-content: center; border-radius: 2px; }
.check.on { background: #dbeafe; border: 1px solid #2f6ed8; }
.c-ring { fill: none; stroke: #8a8a8a; stroke-width: 1; }
.c-mark { fill: none; stroke: #707070; stroke-width: 2.200; }
.c-mark-w { fill: none; stroke: #fff; stroke-width: 2.200; }

/* right rail */
.right-rail { justify-self: end; align-self: start; padding: 161px 17px 0 0; display: flex; flex-direction: column; gap: 12px; width: 73px; }
.panel { background: #f5f5f5; border-radius: 5px; width: 56px; display: flex; flex-direction: column; align-items: center; }
.p1 { height: 56px; justify-content: center; }
.p2 { height: 386px; padding-top: 5px; }
.p3 { height: 190px; margin-top: 2px; padding-top: 3px; }
.tool { position: relative; width: 40px; height: 45px; display: flex; align-items: center; justify-content: center; flex: none; }
.ti { width: 30px; height: 26px; }
.p1 .tool { height: 40px; }
.tool-wheel { height: 45px; }
.wheel { width: 27px; height: 27px; border-radius: 50%; border: 1px solid #ccc; background: radial-gradient(circle, #fff 0, rgba(255, 255, 255, 0) 65%), conic-gradient(#ff3b30, #ffd500, #5ee03a, #2fd3e8, #3a5cff, #d42ce0, #ff3b30); }
.corner { position: absolute; left: 2px; bottom: 3px; width: 0; height: 0; border-style: solid; border-width: 0 5px 5px 0; border-color: transparent transparent #555 transparent; }
.cube-bg { width: 28px; height: 31px; background: #cfe2fb; display: flex; align-items: center; justify-content: center; }
.tool-sep { width: 40px; height: 1px; background: #c8c8c8; margin: 3px 0 4px; flex: none; }
.tool.selected { width: 40px; height: 39px; margin-top: 3px; background: #dbeafe; border: 1px solid #2f6ed8; border-radius: 2px; }
.ti-gum { fill: #bcd4f2; stroke: #4f5f74; stroke-width: 1; }
.ti-line { stroke: #5f7087; stroke-width: .6; fill: none; }
.ti-teeth { fill: #fff; stroke: #4c5560; stroke-width: .9; }
.occ { fill: #c9c9c9; stroke: #777; stroke-width: 1; }
.occ-in { fill: #a9cbf7; stroke: #fff; stroke-width: 1.500; stroke-dasharray: 3 1; }
.hl { position: absolute; border: 5px solid #8cc84b; }
.hl-a { left: -16px; top: -17px; width: 75px; height: 75px; }
.hl-b { left: -12px; top: -11px; width: 66px; height: 63px; border-width: 4px; }

/* bottom */
.bottom { align-self: end; justify-self: stretch; padding: 0 17px 19px 137px; }
.view-row { display: flex; align-items: flex-start; }
.view-select { width: 686px; height: 55px; margin-top: 18px; background: #fff; border: 1px solid #bdbdbd; border-radius: 3px; display: flex; align-items: center; padding: 0 18px 0 15px; flex: none; }
.view-select.second { margin-left: 192px; }
.view-name { font-size: 14px; font-weight: 600; color: #2f6ed8; white-space: nowrap; }
.view-name.wide { letter-spacing: .16px; }
.view-num { font-size: 14px; font-weight: 600; color: #2f6ed8; }
.view-sep { width: 1px; height: 15px; background: #cfcfcf; margin: 0 8px; }
.view-icons { margin-left: auto; display: flex; gap: 7px; margin-right: 10px; }
.caret { margin-left: auto; flex: none; }
.view-icons + .caret { margin-left: 0; }
.caret path { fill: none; stroke: #777; stroke-width: 1.500; }
.axis { width: 50px; height: 50px; margin-left: 32px; background: #fff; border: 1px solid #cfcfcf; border-bottom: 2px solid #bbb; border-radius: 2px; font-size: 22px; line-height: 46px; color: #444; text-align: center; flex: none; }
.axis small { font-size: 14px; font-weight: 700; vertical-align: 2px; }
.action-row { display: flex; justify-content: flex-end; align-items: center; gap: 21px; margin-top: 17px; }
.mentor { width: 55px; height: 55px; background: #fff; border-radius: 3px; box-shadow: 0 0 2px rgba(0, 0, 0, .18); display: block; }
.mentor svg { display: block; }
.next { width: 56px; height: 56px; background: #2b6de2; color: #fff; border-radius: 6px; display: flex; flex-direction: column; align-items: center; justify-content: center; font-size: 12px; font-weight: 600; line-height: 16px; }
.next path { fill: none; stroke: #fff; stroke-width: 2; }
.teal { fill: #b8f0ea; stroke: #17a89a; stroke-width: 1; }
.teal-l { stroke: #17a89a; stroke-width: 1; fill: none; }
.teal-f { fill: #b8f0ea; stroke: #5ccdc0; stroke-width: 1; }
```
